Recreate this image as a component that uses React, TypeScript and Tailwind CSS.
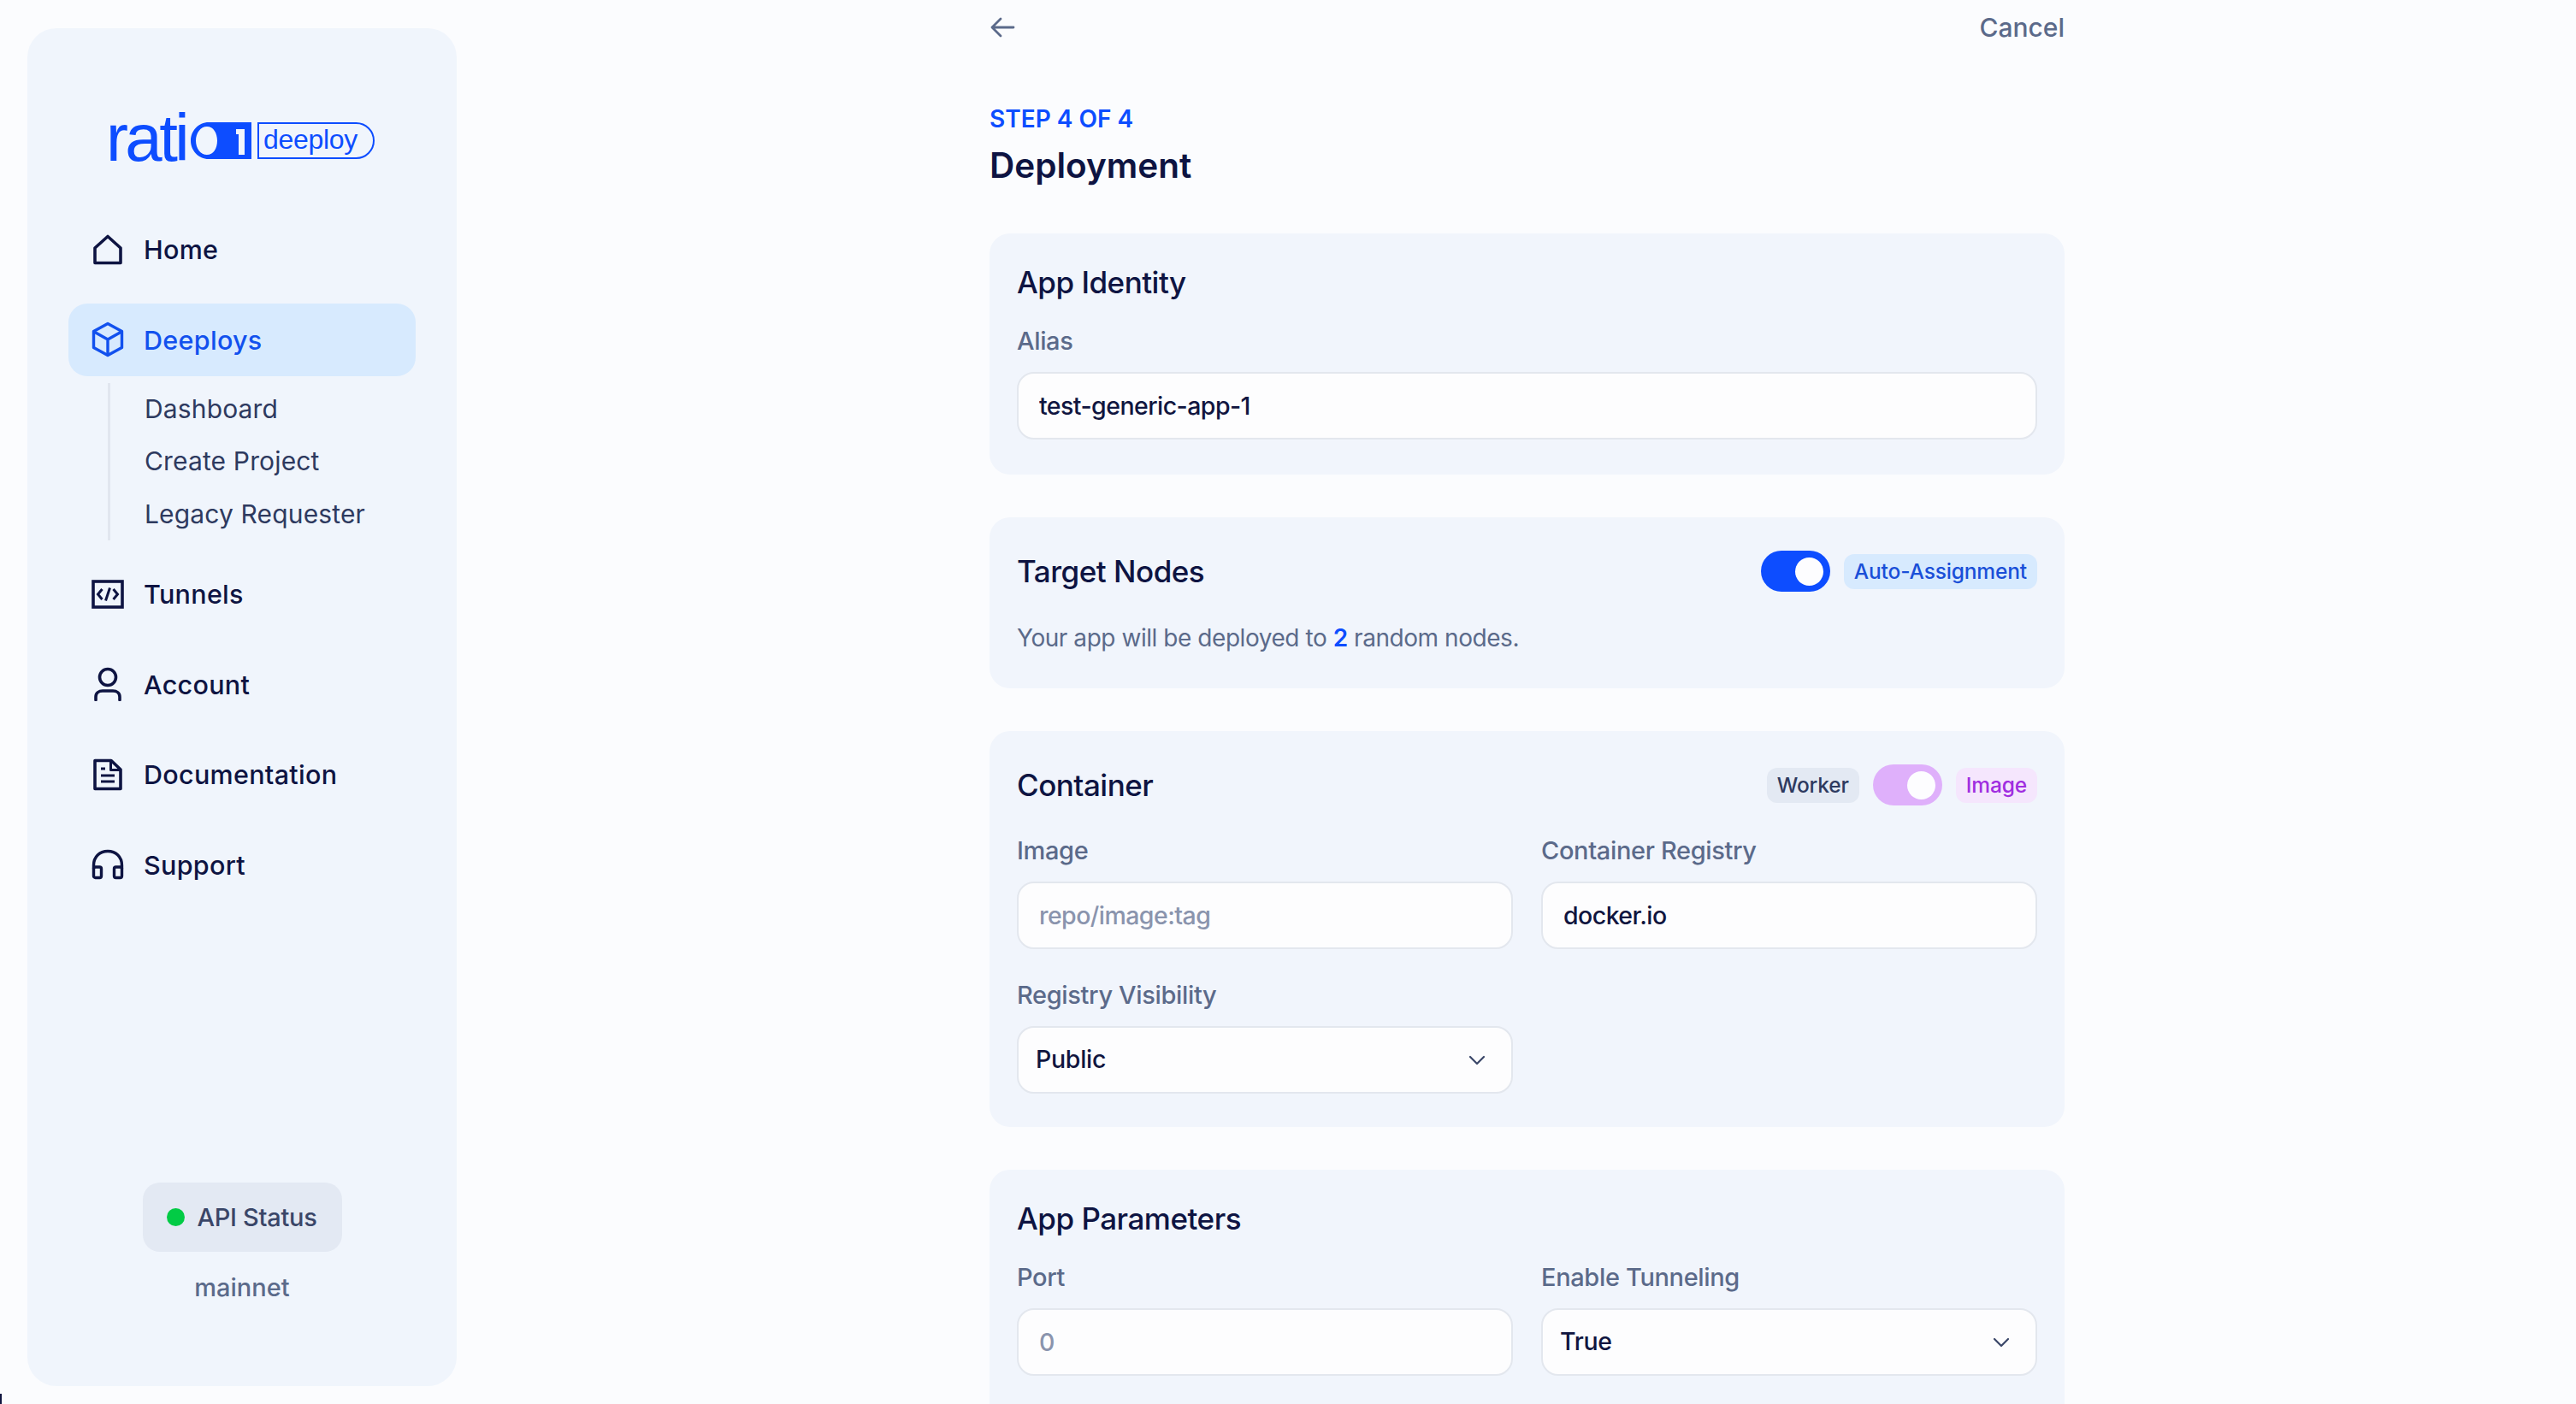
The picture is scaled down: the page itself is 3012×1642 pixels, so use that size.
import type { ReactNode } from "react";

const navIcon = "shrink-0 fill-none stroke-current";

function HomeIcon() {
  return (
    <svg viewBox="0 0 36 36" className={`${navIcon} w-9 h-9`} strokeWidth="3.6" strokeLinejoin="round" strokeLinecap="round">
      <path d="M3 16 L18 2.5 L33 16 V33.5 H3 Z" />
    </svg>
  );
}

function CubeIcon() {
  return (
    <svg viewBox="0 0 38 42" className={`${navIcon} w-[38px] h-[42px]`} strokeWidth="3.4" strokeLinejoin="round" strokeLinecap="round">
      <path d="M19 2.5 L35.5 11.5 V30.5 L19 39.5 L2.5 30.5 V11.5 Z" />
      <path d="M3 12 L19 21 L35 12 M19 21 V39" />
    </svg>
  );
}

function CodeIcon() {
  return (
    <svg viewBox="0 0 38 34" className={`${navIcon} w-[38px] h-[34px]`} strokeWidth="3.6" strokeLinejoin="miter">
      <rect x="2" y="2" width="34" height="30" />
      <path d="M12.5 11 L7.5 17 L12.5 23 M25.5 11 L30.5 17 L25.5 23 M21.5 9.5 L16.5 24.5" strokeWidth="3" />
    </svg>
  );
}

function UserIcon() {
  return (
    <svg viewBox="0 0 34 40" className={`${navIcon} w-[34px] h-10`} strokeWidth="3.6" strokeLinecap="round">
      <ellipse cx="17" cy="12" rx="9.5" ry="9.5" />
      <path d="M3 38.5 V35 C3 30.5 6.5 28 11 28 H23 C27.5 28 31 30.5 31 35 V38.5" />
    </svg>
  );
}

function DocIcon() {
  return (
    <svg viewBox="0 0 36 38" className={`${navIcon} w-9 h-[38px]`} strokeWidth="3.6" strokeLinejoin="round">
      <path d="M3 2.5 H22 L33 13 V35.5 H3 Z" />
      <path d="M21.5 2.5 V13.5 H33" strokeWidth="3" />
      <path d="M10 12 H15 M10 20 H26 M10 27 H26" strokeWidth="3" />
    </svg>
  );
}

function HeadsetIcon() {
  return (
    <svg viewBox="0 0 38 36" className={`${navIcon} w-[38px] h-9`} strokeWidth="3.4" strokeLinejoin="round" strokeLinecap="round">
      <path d="M2.5 23 V19 C2.5 9 9.5 2.5 19 2.5 C28.5 2.5 35.5 9 35.5 19 V23" />
      <rect x="2.5" y="21" width="9" height="12.5" rx="2" />
      <rect x="26.5" y="21" width="9" height="12.5" rx="2" />
    </svg>
  );
}

function Chevron() {
  return (
    <svg viewBox="0 0 20 12" className="w-5 h-3 fill-none stroke-[#3a4668]" strokeWidth="2.2" strokeLinecap="round" strokeLinejoin="round">
      <path d="M2 2 L10 10 L18 2" />
    </svg>
  );
}

function Logo() {
  return (
    <div className="flex items-end h-[56px] text-[#0d4dff]">
      <span className="font-['Liberation_Sans',sans-serif] text-[78px] leading-[56px] tracking-[-3.6px] h-[56px] flex items-end">
        <span className="leading-none mb-[-14px]">rati</span>
      </span>
      <svg viewBox="0 0 71 43" className="w-[71px] h-[43px] ml-[5px] fill-current">
        <path
          fillRule="evenodd"
          d="M21 0 H71 V43 H21 C9 43 0 33 0 21.5 C0 10 9 0 21 0 Z M19 5 C11.5 5 6 12.5 6 21.5 C6 30.5 11.5 38 19 38 C26.5 38 31 30.5 31 21.5 C31 12.5 26.5 5 19 5 Z M53 8 V14 H56 V38 H63 V8 Z"
        />
      </svg>
      <span className="ml-[7px] h-[43px] w-[137px] border-2 border-current rounded-r-full flex items-center pl-[5px] text-[32px] leading-none font-['Liberation_Sans',sans-serif] tracking-[-0.3px]">
        <span className="mt-[-4px]">deeploy</span>
      </span>
    </div>
  );
}

function NavItem({ icon, label, active }: { icon: ReactNode; label: string; active?: boolean }) {
  return (
    <div
      className={`h-[85px] rounded-[22px] flex items-center pl-[25px] ${
        active ? "bg-[#d7eafe] text-[#1251ee]" : "text-[#0e1442]"
      }`}
    >
      <div className="w-[42px] flex justify-center mr-[21px]">{icon}</div>
      <span className="text-[30.5px] font-medium tracking-[0.3px] mt-[1px]">{label}</span>
    </div>
  );
}

function Sidebar() {
  return (
    <aside className="w-[502px] h-[1588px] mt-[33px] ml-[32px] shrink-0 bg-[#f0f5fc] rounded-[34px] flex flex-col items-stretch">
      <div className="pt-[97px] pl-[92px]">
        <Logo />
      </div>
      <nav className="px-[48px] mt-[63px] flex flex-col gap-[20.5px]">
        <NavItem icon={<HomeIcon />} label="Home" />
        <div>
          <NavItem icon={<CubeIcon />} label="Deeploys" active />
          <div className="ml-[46px] mt-[8px] border-l-[3px] border-[#e1e6ef] h-[184px] pl-[40px] flex flex-col text-[#2e3a5f] text-[30px] tracking-[0.15px] leading-[61.5px]">
            <span>Dashboard</span>
            <span>Create Project</span>
            <span>Legacy Requester</span>
          </div>
        </div>
        <NavItem icon={<CodeIcon />} label="Tunnels" />
        <NavItem icon={<UserIcon />} label="Account" />
        <NavItem icon={<DocIcon />} label="Documentation" />
        <NavItem icon={<HeadsetIcon />} label="Support" />
      </nav>
      <div className="mt-auto pb-[96px] flex flex-col items-center">
        <div className="h-[81px] w-[233px] rounded-[20px] bg-[#e3e9f3] flex items-center pl-[28px] gap-[15px]">
          <span className="w-[21px] h-[21px] rounded-full bg-[#02cb45]" />
          <span className="text-[29px] font-medium text-[#3a4668] tracking-[-0.3px]">API Status</span>
        </div>
        <span className="mt-[23px] text-[29px] font-medium text-[#5b6a8a] leading-[38px]">mainnet</span>
      </div>
    </aside>
  );
}

const labelClass = "block text-[29px] font-medium text-[#5b6a8a] leading-[38px] mb-[17px] tracking-[-0.35px]";

function Field({ label, value, placeholder }: { label: string; value?: string; placeholder?: string }) {
  return (
    <div className="flex-1 min-w-0">
      <label className={labelClass}>{label}</label>
      <input
        readOnly
        value={value}
        placeholder={placeholder}
        className="w-full h-[79px] rounded-[20px] border-2 border-[#e3e7ee] bg-[#fdfdfe] px-[24px] text-[28.5px] font-medium tracking-[-0.55px] text-[#10153f] placeholder:text-[#8a94ad] outline-none"
      />
    </div>
  );
}

function SelectField({ label, value }: { label: string; value: string }) {
  return (
    <div className="flex-1 min-w-0">
      <label className={labelClass}>{label}</label>
      <div className="h-[79px] rounded-[20px] border-2 border-[#e3e7ee] bg-[#fdfdfe] pl-[20px] pr-[30px] flex items-center justify-between text-[28.5px] font-medium tracking-[-0.3px] text-[#10153f]">
        <span>{value}</span>
        <Chevron />
      </div>
    </div>
  );
}

function Toggle({ tone }: { tone: string }) {
  return (
    <div className={`w-[81px] h-[48px] rounded-full flex items-center justify-end pr-[8px] ${tone}`}>
      <span className="w-[33px] h-[33px] rounded-full bg-[#fdfdff]" />
    </div>
  );
}

function Pill({ tone, children }: { tone: string; children: ReactNode }) {
  return (
    <span className={`h-[41px] px-[12px] rounded-[12px] flex items-center text-[24.5px] font-medium tracking-[-0.15px] ${tone}`}>
      {children}
    </span>
  );
}

function Card({ title, right, children, className }: { title: string; right?: ReactNode; children: ReactNode; className?: string }) {
  return (
    <section className={`bg-[#f1f5fc] rounded-[24px] px-[32px] shrink-0 ${className ?? ""}`}>
      <div className={`h-[48px] flex items-center justify-between ${right ? "mt-[39px]" : "mt-[33px]"}`}>
        <h2 className="text-[35px] font-medium text-[#0e1442] tracking-[-0.5px]">{title}</h2>
        {right}
      </div>
      {children}
    </section>
  );
}

export default function App() {
  return (
    <div className="w-full h-screen bg-[#fbfcfe] flex overflow-hidden relative font-['Inter',sans-serif]">
      <Sidebar />
      <main className="w-[1257px] ml-[623px] shrink-0 flex flex-col">
        <div className="h-[64px] shrink-0 flex items-center justify-between">
          <svg viewBox="0 0 30 26" className="w-[30px] h-[26px] fill-none stroke-[#5b6a8a]" strokeWidth="2.8" strokeLinecap="round" strokeLinejoin="round">
            <path d="M28 13 H3 M13 3 L3 13 L13 23" />
          </svg>
          <span className="text-[30px] font-medium text-[#5b6a8a]">Cancel</span>
        </div>
        <p className="shrink-0 mt-[55px] text-[28px] font-semibold text-[#0d4dff] leading-[40px]">STEP 4 OF 4</p>
        <h1 className="shrink-0 text-[40.5px] font-semibold text-[#0e1442] leading-[52px] mt-[9px]">Deployment</h1>
        <div className="shrink-0 mt-[53px] flex flex-col gap-[50px]">
          <Card title="App Identity" className="h-[282px]">
            <div className="mt-[26px]">
              <Field label="Alias" value="test-generic-app-1" />
            </div>
          </Card>
          <Card
            title="Target Nodes"
            className="h-[200px]"
            right={
              <div className="flex items-center gap-[16px]">
                <Toggle tone="bg-[#0d4dff]" />
                <Pill tone="bg-[#d7eafe] text-[#1a4fd8]">Auto-Assignment</Pill>
              </div>
            }
          >
            <p className="mt-[35px] text-[28px] text-[#5b6a8a] leading-[38px] tracking-[-0.45px]">
              Your app will be deployed to <span className="text-[#0d4dff] font-semibold">2</span> random nodes.
            </p>
          </Card>
          <Card
            title="Container"
            className="h-[463px]"
            right={
              <div className="flex items-center gap-[16px]">
                <Pill tone="bg-[#e3e9f3] text-[#2e3a5f]">Worker</Pill>
                <Toggle tone="bg-[#dfb0fb]" />
                <Pill tone="bg-[#f5e6fd] text-[#a02de0]">Image</Pill>
              </div>
            }
          >
            <div className="mt-[34px] flex gap-[33px]">
              <Field label="Image" placeholder="repo/image:tag" />
              <Field label="Container Registry" value="docker.io" />
            </div>
            <div className="mt-[35px] flex gap-[33px]">
              <SelectField label="Registry Visibility" value="Public" />
              <div className="flex-1" />
            </div>
          </Card>
          <Card title="App Parameters" className="h-[320px]">
            <div className="mt-[26px] flex gap-[33px]">
              <Field label="Port" placeholder="0" />
              <SelectField label="Enable Tunneling" value="True" />
            </div>
          </Card>
        </div>
      </main>
      <span className="absolute left-0 bottom-0 w-[2px] h-[12px] bg-[#10153f]" />
    </div>
  );
}
